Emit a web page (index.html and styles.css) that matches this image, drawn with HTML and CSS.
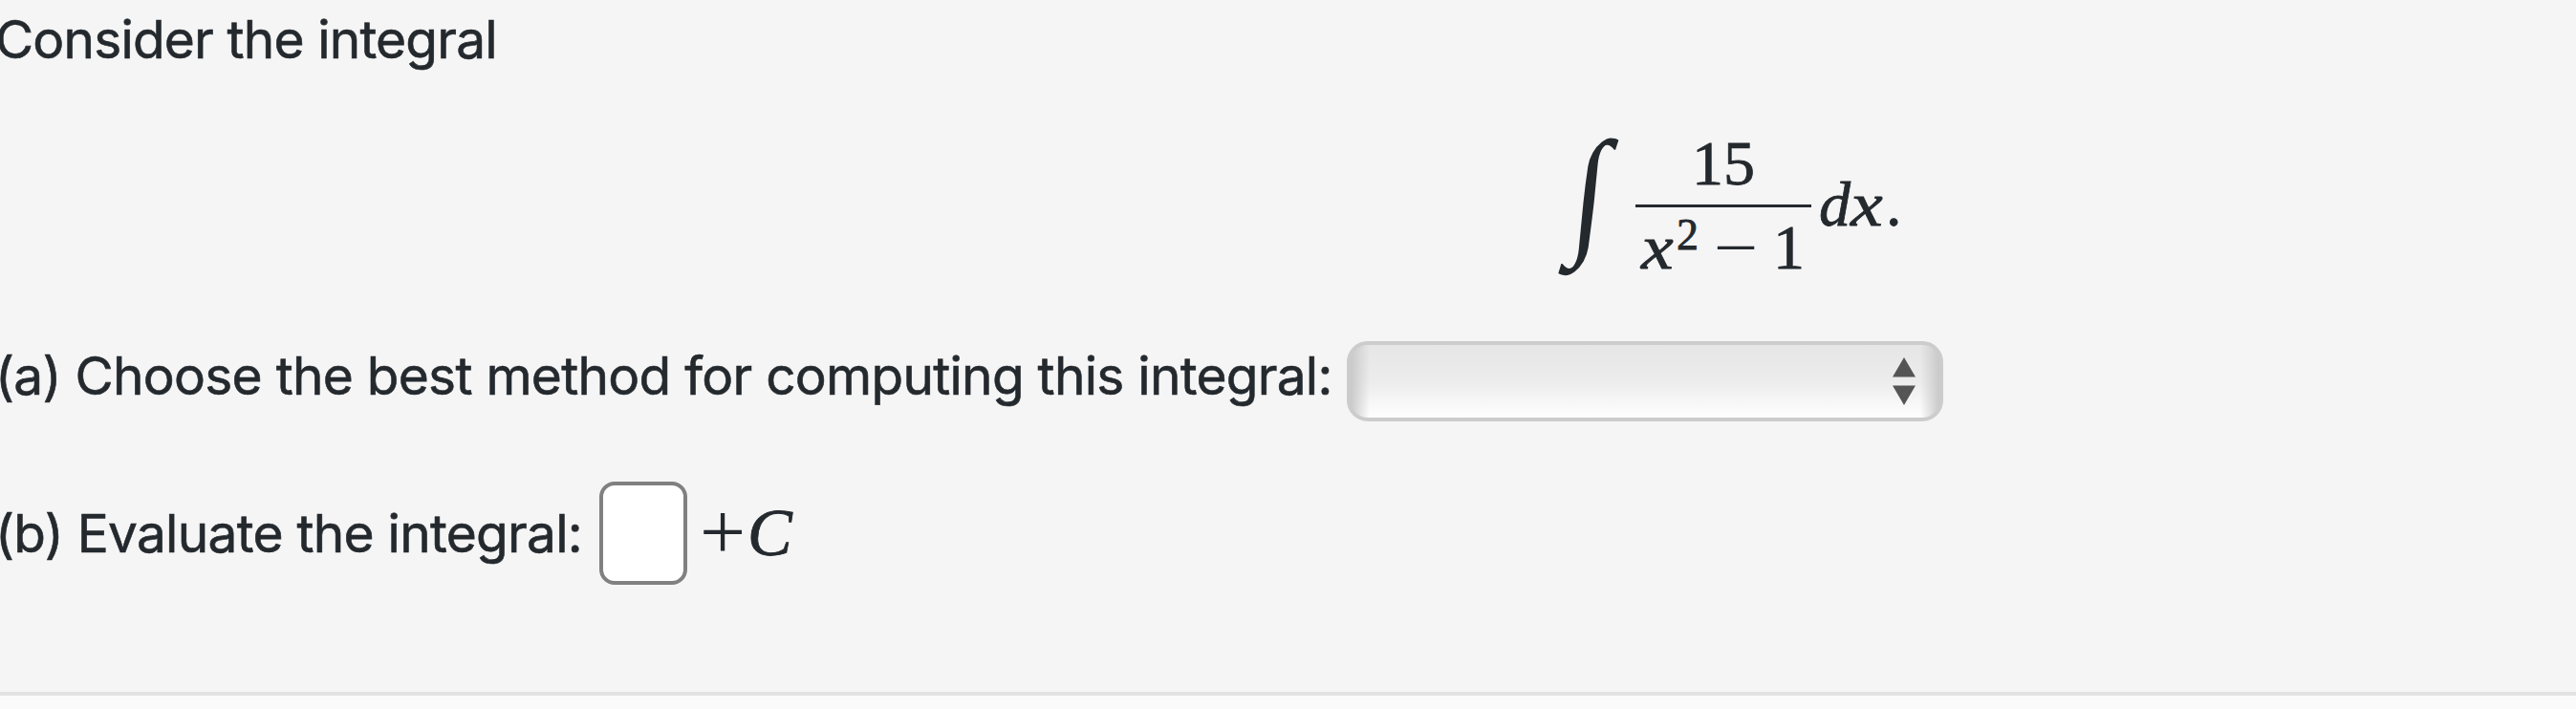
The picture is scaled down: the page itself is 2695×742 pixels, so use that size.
FILE: index.html
```html
<!DOCTYPE html>
<html lang="en">
<head>
<meta charset="utf-8">
<title>Consider the integral</title>
<link rel="stylesheet" href="styles.css">
</head>
<body>
<main class="problem">
  <p class="intro"><span class="t t-intro">Consider the integral</span></p>
  <div class="formula">
    <span class="int">∫</span>
    <span class="frac">
      <span class="num">15</span>
      <span class="den"><i class="x">x</i><sup>2</sup><span class="minus">−</span><span>1</span></span>
    </span>
    <span class="dx"><i>d</i><i class="x">x</i><span>.</span></span>
  </div>
  <div class="row row-a">
    <span class="t t-a">(a) Choose the best method for computing this integral:</span>
    <div class="select" role="combobox" aria-label="Method">
      <svg class="arrows" width="26" height="50" viewBox="0 0 26 50"><path d="M13 0 25 20.500H1ZM1 29.500H25L13 50Z"/></svg>
    </div>
  </div>
  <div class="row row-b">
    <span class="t t-b">(b) Evaluate the integral:</span>
    <input class="answer" type="text" aria-label="Answer">
    <span class="plus">+</span><i class="c">C</i>
  </div>
</main>
</body>
</html>
```
FILE: styles.css
```css
* { box-sizing: border-box; }
html, body { margin: 0; height: 742px; overflow: hidden; background: #fafafa; }
.problem {
  height: 728px;
  background: #f5f5f5;
  border-bottom: 4px solid #e2e2e2;
  font: 400 55px/84px Inter, sans-serif;
  color: #24292e;
}
.t { display: block; white-space: nowrap; letter-spacing: -0.73px; -webkit-text-stroke: 0.6px #24292e; }
.intro { margin: 0 0 0 -5px; height: 83px; line-height: 82px; }
.t-intro { letter-spacing: -0.82px; }
.formula {
  height: 150px;
  margin: 60px 0 0 1630px;
  display: flex;
  align-items: flex-start;
  font: 66px/66px "Liberation Serif", serif;
  -webkit-text-stroke: 0.8px #24292e;
}
.int { width: 81px; font-size: 132px; line-height: 150px; transform: translate(15px, -18px) skewX(-6deg) scale(0.97, 1.11); -webkit-text-stroke: 0; }
.frac { width: 184px; display: flex; flex-direction: column; }
.num { height: 74px; line-height: 55px; text-align: center; border-bottom: 3px solid #24292e; }
.den { display: flex; padding-left: 6px; height: 66px; padding-top: 9px; }
.x { display: inline-block; width: 35px; transform: scaleX(1.15); transform-origin: 0 0; }
.den sup { width: 30px; font-size: 46px; line-height: 40px; margin: 0 0 0 2px; }
.minus { display: inline-block; width: 71px; padding-left: 7px; transform: scaleX(1.25); transform-origin: 0 0; -webkit-text-stroke: 0; }
.dx { margin: 38px 0 0 8px; white-space: nowrap; }
.dx span { margin-left: 2px; }
.row { display: flex; align-items: center; }
.row-a { margin-top: 64px; height: 84px; }
.row-b { margin-top: 63px; height: 108px; }
.t-a, .t-b { margin-left: -5px; flex: none; }
.t-a { width: 1414px; line-height: 73px; height: 84px; }
.t-b { width: 632px; line-height: 82px; }
.select {
  width: 624px; height: 84px;
  border: 4px solid #ccc; border-radius: 22px;
  background:
    linear-gradient(90deg, #c9c9c9, rgba(201,201,201,0) 20px, rgba(201,201,201,0) calc(100% - 20px), #c9c9c9),
    linear-gradient(#e6e6e6, #ececec 50%, #fff);
  display: flex; align-items: center; justify-content: flex-end; padding-right: 24px;
}
.arrows { fill: #555; }
.answer { width: 92px; height: 108px; border: 4px solid #808080; border-radius: 16px; background: #fff; padding: 0; }
.plus, .c { font: 70px/70px "Liberation Serif", serif; }
.plus { margin-left: 13px; width: 50px; transform: scale(1.22); transform-origin: 0 60%; }
.c { font-style: italic; -webkit-text-stroke: 0.8px #24292e; }
```
